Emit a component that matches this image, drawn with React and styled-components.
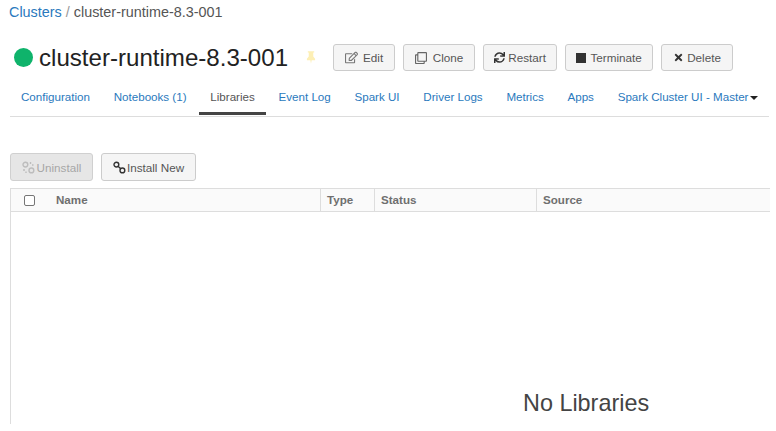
import React from "react";
import styled, { createGlobalStyle } from "styled-components";
import { FaRegEdit, FaRegClone, FaSync, FaTimes } from "react-icons/fa";

const GlobalStyle = createGlobalStyle`
  html, body {
    margin: 0;
    padding: 0;
    background: #fff;
    overflow: hidden;
  }
  body {
    font-family: "Liberation Sans", Arial, sans-serif;
    font-size: 11.6px;
    color: #333;
  }
`;

const Page = styled.div`
  width: 776px;
  height: 431px;
  display: flex;
  flex-direction: column;
  overflow: hidden;
`;

const Breadcrumb = styled.div`
  height: 24px;
  padding-left: 9px;
  display: flex;
  align-items: center;
  gap: 4px;
  font-size: 14.4px;
  color: #555;
`;

const CrumbLink = styled.a`
  color: #2a79bd;
`;

const Divider = styled.span`
  color: #999;
`;

const Header = styled.div`
  margin-top: 20px;
  padding-left: 14px;
  height: 27px;
  display: flex;
  align-items: center;
`;

const StatusDot = styled.span`
  width: 19px;
  height: 19px;
  border-radius: 50%;
  background: #0fb36b;
  margin-right: 6px;
`;

const Title = styled.h1`
  margin: 0;
  font-size: 24.1px;
  font-weight: 400;
  color: #222;
  white-space: nowrap;
`;

const Pin = styled.span`
  display: flex;
  margin: 0 17px 0 18px;
  color: #fdefb5;
`;

const ButtonRow = styled.div`
  display: flex;
  gap: 8px;
`;

const Button = styled.button`
  height: ${(p) => p.$height || 27}px;
  width: ${(p) => p.$width}px;
  padding: 0;
  display: flex;
  align-items: center;
  justify-content: center;
  gap: ${(p) => p.$gap || 4}px;
  font-family: inherit;
  font-size: 11.7px;
  color: ${(p) => (p.disabled ? "#a6a6a6" : "#555")};
  background: ${(p) => (p.disabled ? "#e6e6e6" : "#f5f5f5")};
  border: 1px solid ${(p) => (p.disabled ? "#d0d0d0" : "#ccc")};
  border-radius: 3px;

  svg {
    flex: none;
    font-size: ${(p) => p.$iconSize || 11}px;
    color: ${(p) => (p.disabled ? "#bdbdbd" : p.$iconColor || "#333")};
  }
`;

const StopSquare = styled.span`
  width: 10px;
  height: 10px;
  background: #333;
`;

const Tabs = styled.div`
  margin: 8px 7px 0 10px;
  height: 37px;
  display: flex;
  gap: 1.75px;
  border-bottom: 1px solid #ddd;
`;

const Tab = styled.a`
  height: 36px;
  box-sizing: border-box;
  padding: 11px 11px 0;
  white-space: nowrap;
  display: flex;
  align-items: flex-start;
  gap: 2px;
  color: ${(p) => (p.$active ? "#555" : "#2a79bd")};
  border-bottom: 3px solid ${(p) => (p.$active ? "#444" : "transparent")};
`;

const Caret = styled.span`
  width: 0;
  height: 0;
  margin-top: 6px;
  border-left: 4px solid transparent;
  border-right: 4px solid transparent;
  border-top: 4px solid #222;
`;

const Toolbar = styled.div`
  margin: 36px 0 0 10px;
  display: flex;
  gap: 8px;
`;

const Table = styled.div`
  margin: 7px 0 7px 10px;
  width: 759px;
  flex: 1;
  display: flex;
  flex-direction: column;
  border-left: 1px solid #ddd;
`;

const HeadRow = styled.div`
  height: 24px;
  box-sizing: border-box;
  display: grid;
  grid-template-columns: 39px 270px 54px 162px 1fr;
  background: #fafafa;
  border-top: 1px solid #ddd;
  border-bottom: 1px solid #ddd;
`;

const HeadCell = styled.div`
  display: flex;
  align-items: center;
  padding: 0 0 1px 6px;
  font-weight: 700;
  color: #6f6f6f;
  & + & {
    border-left: 1px solid #ddd;
  }
`;

const CheckCell = styled.div`
  display: flex;
  align-items: center;
  justify-content: center;
  padding-right: 2px;
`;

const Check = styled.span`
  width: 11px;
  height: 11px;
  box-sizing: border-box;
  border: 1px solid #767676;
  border-radius: 2px;
  background: #fff;
`;

const Empty = styled.div`
  flex: 1;
  padding: 177px 0 0 512px;
  font-size: 23.4px;
  line-height: 28px;
  color: #444;
  white-space: nowrap;
`;

function PinIcon() {
  return (
    <svg width="10" height="13" viewBox="0 0 11 14" fill="currentColor">
      <path d="M2 0h7v1.5H8V6l2 2.5V10H6.2L5.5 14l-.7-4H1V8.5L3 6V1.5H2z" />
    </svg>
  );
}

function LinkIcon({ broken }) {
  return (
    <svg
      width="13"
      height="13"
      viewBox="0 0 13 13"
      fill="none"
      stroke="currentColor"
      strokeWidth="1.4"
    >
      <circle cx="3.4" cy="3.6" r="2.4" />
      <circle cx="9.4" cy="9.4" r="2.4" />
      {broken ? (
        <path d="M8.5 1v2M11.5 4H10M1 9h2M4 12v-1.5" />
      ) : (
        <path d="M5 5.2l2.8 2.6" />
      )}
    </svg>
  );
}

const actions = [
  { label: "Edit", icon: <FaRegEdit />, width: 62, color: "#777", size: 13, gap: 5 },
  { label: "Clone", icon: <FaRegClone />, width: 72, color: "#666", size: 12, gap: 6 },
  { label: "Restart", icon: <FaSync />, width: 74, color: "#333", size: 11, gap: 3 },
  { label: "Terminate", icon: <StopSquare />, width: 88, color: "#333", gap: 4 },
  { label: "Delete", icon: <FaTimes />, width: 72, color: "#333", size: 11, gap: 3 }
];

const tabs = [
  { label: "Configuration" },
  { label: "Notebooks (1)" },
  { label: "Libraries", active: true },
  { label: "Event Log" },
  { label: "Spark UI" },
  { label: "Driver Logs" },
  { label: "Metrics" },
  { label: "Apps" },
  { label: "Spark Cluster UI - Master", caret: true }
];

function App() {
  return (
    <Page>
      <GlobalStyle />
      <Breadcrumb>
        <CrumbLink>Clusters</CrumbLink>
        <Divider>/</Divider>
        <span>cluster-runtime-8.3-001</span>
      </Breadcrumb>
      <Header>
        <StatusDot />
        <Title>cluster-runtime-8.3-001</Title>
        <Pin>
          <PinIcon />
        </Pin>
        <ButtonRow>
          {actions.map(({ label, icon, width, color, size, gap }) => (
            <Button key={label} $width={width} $iconColor={color} $iconSize={size} $gap={gap}>
              {icon}
              {label}
            </Button>
          ))}
        </ButtonRow>
      </Header>
      <Tabs>
        {tabs.map((tab) => (
          <Tab key={tab.label} $active={tab.active}>
            {tab.label}
            {tab.caret && <Caret />}
          </Tab>
        ))}
      </Tabs>
      <Toolbar>
        <Button disabled $width={83} $height={28} $gap={2}>
          <LinkIcon broken />
          Uninstall
        </Button>
        <Button $width={95} $height={28} $gap={1}>
          <LinkIcon />
          Install New
        </Button>
      </Toolbar>
      <Table>
        <HeadRow>
          <CheckCell>
            <Check />
          </CheckCell>
          <HeadCell>Name</HeadCell>
          <HeadCell>Type</HeadCell>
          <HeadCell>Status</HeadCell>
          <HeadCell>Source</HeadCell>
        </HeadRow>
        <Empty>No Libraries</Empty>
      </Table>
    </Page>
  );
}

export default App;
